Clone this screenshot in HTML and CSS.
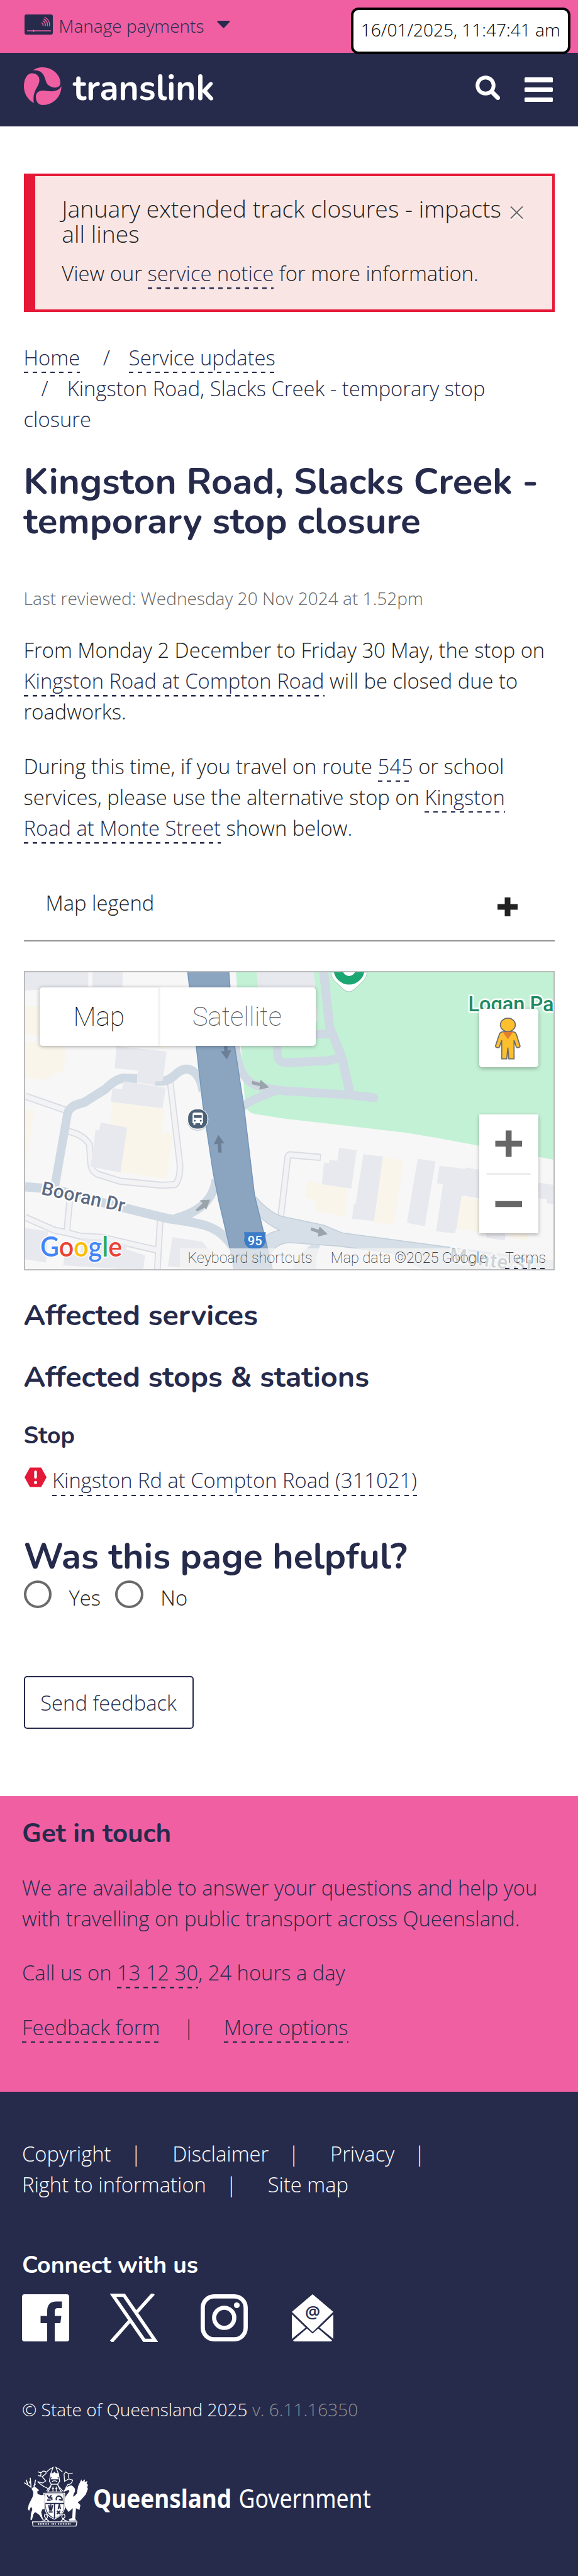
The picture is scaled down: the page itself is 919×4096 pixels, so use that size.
FILE: index.html
```html
<!DOCTYPE html>
<html lang="en">
<head>
<meta charset="utf-8">
<title>Kingston Road, Slacks Creek - temporary stop closure | Translink</title>
<link rel="stylesheet" href="styles.css">
</head>
<body>
<div class="topbar">
  <svg class="card-icon" viewBox="0 0 45 32"><rect width="45" height="32" rx="3" fill="#262b4c"/><g fill="none" stroke="#ef5fa1" stroke-width="1.5"><path d="M4 26h38M14.500 24v4"/><path d="M27 13q3 2 2.500 5M29 10q5 3 4 8.500M30.500 7q7 4.500 6 11.500M32 4q9 6 8 14.500"/></g></svg>
  <span class="topbar-label">Manage payments</span>
  <svg class="caret" viewBox="0 0 21 12"><path d="M1 0h19q1 1 0 2l-8.500 9q-1 1-2 0L.5 2Q0 1 1 0z" fill="#262b4c"/></svg>
  <div class="timestamp">16/01/2025, 11:47:41 am</div>
</div>
<header class="header">
  <svg class="swirl" viewBox="0 0 60 60" fill="#ef5fa1"><path d="M14 5Q21 0 29 0C46 0 58 12 58 25C58 31 52 33 47 32C38 30 36 26 34 19C31 9 26 4 14 5Z"/><path d="M15.800 57C6 51 0 42 0 30C0 19 5 9.400 12.500 9.400C20 9.400 25 14 24.600 21C24 32 13 36 15.800 57Z"/><path d="M59.500 30C60 47 46 60 30 60C23 60 19 54 19 47C19 40 24 37 31 37C40 38 54 41 59.500 30Z"/></svg>
  <svg class="brand" viewBox="0 0 230 64"><text x="1" y="53.500" textLength="225" lengthAdjust="spacingAndGlyphs">translink</text></svg>
  <svg class="search" viewBox="0 0 39 39" fill="none" stroke="#fff"><circle cx="16" cy="16" r="12.800" stroke-width="6"/><path d="M26.500 26.500l9 9" stroke-width="7" stroke-linecap="round"/></svg>
  <div class="menu"><i></i><i></i><i></i></div>
</header>

<main class="main">
  <section class="alert">
    <h2 class="alert-title">January extended track closures - impacts<br>all lines</h2>
    <p class="text">View our <a class="link">service notice</a> for more information.</p>
    <svg class="close" viewBox="0 0 21 24" fill="none" stroke-width="1.900"><path d="M1 4l19 19M20 4L1 23" stroke="#fff"/><path d="M1 1.500l19 19M20 1.500l-19 19" stroke="#6f6767"/></svg>
  </section>

  <nav class="crumbs text"><a class="link">Home</a> <span class="slash">/</span><a class="link">Service updates</a><br><span class="slash">/</span>Kingston Road, Slacks Creek - temporary stop<br>closure</nav>

  <h1 class="title">Kingston Road, Slacks Creek -<br>temporary stop closure</h1>
  <p class="reviewed">Last reviewed: Wednesday 20 Nov 2024 at 1.52pm</p>
  <p class="text p1">From Monday 2 December to Friday 30 May, the stop on<br><a class="link">Kingston Road at Compton Road</a> will be closed due to<br>roadworks.</p>
  <p class="text p2">During this time, if you travel on route <a class="link">545</a> or school<br>services, please use the alternative stop on <a class="link">Kingston</a><br><a class="link">Road at Monte Street</a> shown below.</p>

  <div class="legend text"><span>Map legend</span><svg class="plus" viewBox="0 0 32 30"><path d="M16 3.500v23M4 15h24" stroke="#222" stroke-width="9" stroke-linecap="square"/></svg></div>

  <div class="map">
    <svg class="tiles" viewBox="0 0 839.500 472" preserveAspectRatio="none">
      <rect width="840" height="472" fill="#f7f7f7"/>
      <g transform="matrix(.2983 0 0 .3181 -39.700 -17.800)">
        <path fill="#c3f1d5" d="M1255 40L1283 430L1305 720Q1315 755 1350 763L1515 787L2165 858L2335 885L2960 995V40z"/>
        <path fill="#e8e9ee" d="M1365 40H1670L1692 303H1390z"/>
        <g fill="none" stroke="#cfd9e3" stroke-width="44">
          <path d="M1255 430Q1270 580 1350 615Q1420 640 1515 648L1850 668L1992 683" stroke-linecap="round"/>
          <path d="M1293 725Q1340 690 1480 645M1475 420L1478 480Q1490 510 1530 508L1750 497L1800 485M1660 368L1765 362"/>
          <path d="M1722 40L1755 330L1820 480L1865 665" stroke-width="48"/>
        </g>
        <path fill="#f9f5ea" d="M133 225L230 228V375L133 365zM133 400L350 430L338 555L305 553Q260 593 240 593L133 585zM133 743L182 750L133 1030zM597 703L873 738L860 855L920 865L888 1088L640 1055L587 818zM800 425H905V438z"/>
        <path d="M133 675L350 745M360 850Q440 865 475 915L482 1010Q485 1050 520 1065L640 1100L860 1120L930 1117Q958 1095 958 1020L905 600M133 1280L290 1345L360 1358L430 1375L540 1380L840 1445M370 1200L355 1350M852 1300L837 1545M1494 1280L1532 980Q1533 968 1545 968L1708 981" fill="none" stroke="#d9dce2" stroke-width="36"/>
        <path d="M133 675L350 745M360 850Q440 865 475 915L482 1010Q485 1050 520 1065L640 1100L860 1120L930 1117Q958 1095 958 1020L905 600M133 1280L290 1345L360 1358L430 1375L540 1380L840 1445M370 1200L355 1360M852 1300L837 1545M1494 1285L1532 980Q1533 968 1545 968L1704 981" fill="none" stroke="#f3f3f5" stroke-width="24"/>
        <path d="M133 1128L290 1140L560 1210L900 1288Q1080 1310 1130 1335Q1190 1360 1240 1430M930 1287Q1130 1240 1150 1090M290 1130L358 765Q365 735 400 720L450 705L560 640Q620 585 660 585L730 588M825 600L870 600Q900 595 930 570Q990 515 1040 560Q1070 590 1080 650" fill="none" stroke="#cfd9e3" stroke-width="46"/>
        <path fill="#e8e9ee" d="M133 40H470L468 130L133 147zM492 40H652V130H492zM620 425L887 452L865 600H828L824 620L728 605L733 548L610 535zM655 600L882 632L865 735L590 703L597 635L650 640zM535 806L677 832L640 1057L482 1028L508 843L528 845zM133 1333L255 1350L245 1507L133 1490zM435 1382L677 1415L672 1440L772 1470L762 1545L335 1520L345 1462L425 1470zM918 1380L1075 1402L1130 1460L1110 1545L893 1525z"/>
        <path fill="#d6dfe7" stroke="#c3cfda" stroke-width="5" d="M1350 1165Q1430 1255 1500 1275L1725 1320L1820 1358L2950 1500V1560H2300L2100 1460L1810 1425L1560 1408Q1480 1400 1430 1470L1400 1385Q1440 1350 1490 1345Q1430 1320 1380 1275z"/>
        <path fill="#d6dfe7" d="M1655 1420h50q-30 60-20 125h-130q40-90 100-125z"/>
        <path fill="#8ba4c0" stroke="#7396ba" stroke-width="5" d="M997 40L1045 430L1080 720L1135 1060L1165 1200L1225 1440L1250 1560H1455L1405 1360L1355 1170L1300 740L1250 430L1217 40z"/>
        <g fill="#6b8096"><path d="M1193 425h18v22l20-3-23 47-34-40 19-2zM1162 868l32 42-17 1 3 45-18 1-4-44-20 3z"/></g>
        <g fill="#9aa4ab"><path d="M1342 598l40 10 6-15 45 38-52 12 2-18-43-10zM1118 1192l-20 50-8-10-42 20-6-10 36-32-15-15zM1656 1330l40 12 6-16 42 38-52 13 3-18-41-13z"/></g>
        <g transform="matrix(.998 0 0 1 1515.600 0)">
          <path fill="#e8e9ee" d="M290 933L384 945L355 1137L198 1115L210 1007L236 1010L238 995L282 997zM420 965L525 977L477 1298L360 1288L368 1215H378zM710 988L805 1000L748 1325L652 1308zM827 1022L962 1039L970 1031L1060 1047V1190L945 1170L918 1330L908 1361L808 1350L845 1115L812 1110zM1340 1105L1434 1118V1214L1400 1210V1190L1340 1183zM1075 1350L1178 1361L1175 1396L1075 1382z"/>
          <path fill="#f9f5ea" d="M122 1098L198 1115L340 1137L318 1275L160 1250L167 1193L106 1185zM525 980L635 995L583 1315L477 1307zM945 1173L1005 1185L1060 1205V1355L918 1338zM1205 1350L1300 1361L1297 1396L1205 1382z"/>
        </g>
      </g>
      <path d="M485.500 0Q487 9 492 14L507 28Q514.500 34 522 28L537 14Q542 9 543.500 0z" fill="#fff" stroke="#a9cfc0" stroke-width="1"/>
      <circle cx="514.700" cy="-5" r="24.500" fill="#1ba672"/><circle cx="514.700" cy="-4" r="10" fill="#fff"/>
      <circle cx="274.200" cy="234.500" r="17.500" fill="#8a98a5" opacity=".4"/><circle cx="274.200" cy="233.300" r="17" fill="#fff"/>
      <rect x="259" y="218" width="30.500" height="30.500" rx="13" fill="#4b6075"/>
      <path fill="#fff" d="M269 223h10.500q3 0 3 3v14h-1.500v2.500h-3V240h-7.500v2.500h-3V240h-1.500v-14q0-3 3-3z"/><path fill="#4b6075" d="M268 227h12.500v4.500H268z"/><circle cx="269.500" cy="236" r="1.500" fill="#4b6075"/><circle cx="279" cy="236" r="1.500" fill="#4b6075"/>
      <path fill="#3b7bc8" d="M347.800 413h34.600q-1.500 7 0 13-1 9-10.500 13.500-7 2.500-14 0-9-4.500-10-13.500 1.500-6 0-13z"/>
      <g class="maplabels">
        <text x="365" y="433.500" text-anchor="middle" font-size="21" fill="#fff" textLength="23" lengthAdjust="spacingAndGlyphs">95</text>
        <text class="halo" transform="translate(24.500 352.500) rotate(12.300)" font-size="30" fill="#5b6b85" textLength="135">Booran Dr</text>
        <text class="halo" x="704" y="61.500" font-size="32.500" fill="#1f8a5f">Logan Park</text>
        <text class="halo" transform="translate(673 459) rotate(8)" font-size="31" fill="#6d7987" textLength="133">Monte St</text>
      </g>
    </svg>
    <div class="map-type"><span class="mt-map">Map</span><span class="mt-sat">Satellite</span></div>
    <div class="pegman"><svg viewBox="-3 -3 138 226"><g fill="#fdbf2d" stroke="#6f6f6f" stroke-width="6"><path d="M40 75Q25 75 20 90L0 150Q0 160 15 160Q20 160 22 153L33 120V220H60L66 160L71 220H99V120L110 153Q113 160 120 160Q132 158 131 150L112 90Q107 75 92 75z"/><ellipse cx="66" cy="38" rx="40" ry="36"/></g><path d="M39 76H93L66 115z" fill="#e17e30"/></svg></div>
    <div class="zoomer"><svg viewBox="0 0 93.500 189"><path d="M25.500 46.500h42.500M46.700 25.500v42M25.500 142.500h42.500" stroke="#666" stroke-width="9.500"/><path d="M11.600 94.600h70.300" stroke="#e6e6e6" stroke-width="2.300"/></svg></div>
    <svg class="google" viewBox="0 0 136 60"><text x="2" y="34" textLength="130" lengthAdjust="spacingAndGlyphs"><tspan fill="#4285f4">G</tspan><tspan fill="#ea4335">o</tspan><tspan fill="#fbbc05">o</tspan><tspan fill="#4285f4">g</tspan><tspan fill="#34a853">l</tspan><tspan fill="#ea4335">e</tspan></text></svg>
    <div class="attribution"><span>Keyboard shortcuts</span><span class="md">Map data ©2025 Google</span><span class="terms link">Terms</span></div>
  </div>

  <h3 class="sub services">Affected services</h3>
  <h3 class="sub stops">Affected stops &amp; stations</h3>
  <h4 class="small-head stop">Stop</h4>
  <div class="stop-row text"><svg class="warn" viewBox="0 0 35 32"><path d="M8.500.5h18L35 16l-8.500 15.500h-18L0 16z" fill="#e51937"/><path d="M17.500 7.500v8.500" stroke="#fff" stroke-width="4.300" stroke-linecap="round"/><circle cx="17.500" cy="24.200" r="2.500" fill="#fff"/></svg><a class="link">Kingston Rd at Compton Road (311021)</a></div>

  <h2 class="helpful">Was this page helpful?</h2>
  <div class="radios text"><i class="radio"></i><span class="yes">Yes</span><i class="radio"></i><span class="no">No</span></div>
  <button class="send">Send feedback</button>
</main>

<section class="touch">
  <h3 class="touch-head">Get in touch</h3>
  <p class="text">We are available to answer your questions and help you<br>with travelling on public transport across Queensland.</p>
  <p class="text">Call us on <a class="link">13 12 30</a>, 24 hours a day</p>
  <p class="text"><a class="link">Feedback form</a><span class="bar wide">|</span><a class="link">More options</a></p>
</section>

<footer class="footer">
  <div class="text foot-links">Copyright<span class="bar">|</span>Disclaimer<span class="bar">|</span>Privacy<span class="bar">|</span><br>Right to information<span class="bar">|</span>Site map</div>
  <h4 class="small-head connect">Connect with us</h4>
  <div class="social">
    <svg width="75" height="75" viewBox="0 0 75 75"><path fill="#fff" fill-rule="evenodd" d="M4 0h67q4 0 4 4v67q0 4-4 4H52V46h9l1.500-11.500H52V27q0-5 5-5h6.500V11.500H55q-15 0-15 15v8H29.500V46H40v29H4q-4 0-4-4V4q0-4 4-4z"/></svg>
    <svg width="76" height="77" viewBox="0 0 76 77" fill="none" stroke="#fff" stroke-width="5.500"><path d="M4.500 2.500H22L71.500 74.500H54.500z"/><path d="M69 0L41 31M32.500 42L2 76.500"/></svg>
    <svg width="75" height="75" viewBox="0 0 75 75" fill="none" stroke="#fff" stroke-width="6.700"><rect x="3.400" y="3.400" width="68.200" height="68.200" rx="18"/><circle cx="37.500" cy="37.500" r="16"/><circle cx="57.500" cy="17.500" r="4.600" fill="#fff" stroke="none"/></svg>
    <svg width="66" height="75" viewBox="0 0 66 75" fill="#fff"><path d="M33 0L66 28L33 60L0 28zM0 32L22 53L0 71zM66 32L44 53L66 71zM24 54.500L33 62.500L42 54.500L64 73.500Q63 75 61 75H5Q3 75 2 73.500z"/><text x="33" y="38" text-anchor="middle" class="at">@</text></svg>
  </div>
  <p class="copy">© State of Queensland 2025 <span>v. 6.11.16350</span></p>
  <svg class="gov" viewBox="0 0 560 96">
    <g transform="matrix(.2598 0 0 .2598 -5.800 -7.700)" fill="none" stroke="#fff" stroke-width="5">
      <path d="M78 368H351L345 394H82z"/>
      <path fill="#fff" stroke="none" d="M72 165Q85 148 100 158L120 175L108 182L110 198L135 205L152 200V290L138 292L132 310L142 348L158 353L140 355L120 325L95 308L85 320L78 345L75 357L66 354L70 315L78 290L70 275L58 300L50 290L56 262L82 210L84 185z"/>
      <path d="M28 128L50 142L72 158M40 110L52 143M65 98L70 155M98 110L88 155M98 135L86 150M64 132L58 120" stroke-width="6"/>
      <path fill="#fff" stroke="none" d="M268 180Q290 145 318 145Q345 160 338 185Q325 205 330 215L350 195L358 150L378 108L382 122L400 108L398 124L415 118L410 135L418 140L414 158L418 165L405 200L375 235L355 248L372 265L366 295L345 285L340 350L350 360L305 362L300 350L322 345L325 285L300 308L280 280L270 240L280 215L305 180L300 172L270 185z"/>
      <path d="M148 193H276V262Q280 320 212 352Q148 325 156 262z" fill="#262b4c"/>
      <path fill="#fff" stroke="none" d="M155 199H270V252H155zM160 260H210V345Q160 318 160 270zM217 260H270Q275 320 217 345z"/>
      <path stroke="#262b4c" stroke-width="8" d="M168 205L180 222L195 205M168 235H190M185 222h12v14M225 235Q220 212 240 210Q262 215 260 235L240 232M178 265L186 300M190 262V300M202 265L194 300M178 308H202M228 300L248 320M248 300L228 320M236 290L243 262L250 290"/>
      <path d="M165 62L185 45L205 35L190 75L182 120L195 140L165 180M262 62L242 45L222 35L238 75L245 120L230 140L265 180"/>
      <path d="M112 60Q130 75 142 58Q165 55 162 72L138 92L160 118L140 130L110 122Q135 145 150 152L175 165M325 70Q300 78 282 62L272 75L275 120L300 105L325 112Q318 140 295 140L280 165M130 62V88L112 85M300 75V100"/>
      <path fill="#fff" stroke="none" d="M190 70H205L213 60L221 70H240V90L232 96L240 108H190L196 96L188 90z"/>
      <path d="M198 122Q213 112 230 122M190 138H238M192 148Q185 165 172 185H256Q242 165 236 148M204 152V182M224 152V182M197 164H211M217 164H231"/>
      <path d="M135 365Q175 355 170 330Q150 310 152 335Q160 350 180 365M295 365Q255 355 258 330Q275 310 278 335Q270 350 252 365"/>
      <path d="M114 381H180M196 381H222M236 381H316" stroke-width="9" stroke-dasharray="5 5"/>
    </g>
    <text x="111" y="65.500" font-weight="700" textLength="220" lengthAdjust="spacingAndGlyphs">Queensland</text>
    <text x="342.500" y="65.500" font-weight="400" textLength="210" lengthAdjust="spacingAndGlyphs">Government</text>
  </svg>
</footer>
</body>
</html>
```
FILE: styles.css
```css
* { box-sizing: border-box; margin: 0; padding: 0; }
body { width: 919px; height: 4096px; overflow: hidden; background: #fff; color: #222; font-family: "Open Sans", "Noto Sans", sans-serif; font-weight: 300; display: flex; flex-direction: column; }
svg { display: block; flex: none; }
.text { font-size: 32.74px; line-height: 49.1px; white-space: nowrap; }
.link { color: #262b4c; padding-bottom: 2.5px; background: repeating-linear-gradient(90deg, #262b4c 0 7px, transparent 7px 14px) left bottom / 100% 2.5px no-repeat; }

.topbar { position: relative; flex: none; height: 84.2px; background: #ef5fa1; display: flex; align-items: flex-start; padding-left: 38.7px; }
.card-icon { width: 45px; height: 32px; margin-top: 22.5px; }
.topbar-label { font-size: 28.06px; line-height: 42px; margin: 19.5px 0 0 9.5px; color: #262b4c; white-space: nowrap; }
.caret { width: 21px; height: 12px; margin: 32.8px 0 0 20px; }
.timestamp { position: absolute; left: 557.5px; top: 11.7px; width: 349.5px; height: 74.6px; border: 4.7px solid #000; border-radius: 12px; background: #fff; color: #000; font-size: 28.06px; line-height: 63px; text-align: center; white-space: nowrap; z-index: 2; }

.header { flex: none; height: 117px; background: #262b4c; display: flex; align-items: flex-start; padding-left: 37.5px; }
.swirl { width: 60px; height: 60px; margin-top: 22.6px; }
.brand { width: 230px; height: 64px; margin: 20.8px 0 0 17px; font-family: Nunito, "Open Sans", sans-serif; font-weight: 700; font-size: 57px; fill: #fff; }
.search { width: 39px; height: 39px; margin: 36px 0 0 411.500px; }
.menu { width: 44.5px; margin: 39.2px 0 0 39px; display: flex; flex-direction: column; gap: 8.5px; }
.menu i { height: 7.3px; border-radius: 1.5px; background: #fff; }

.main { flex: none; height: 2654.9px; padding: 74.9px 37.5px 0; }
.alert { position: relative; height: 219.7px; border: 4.7px solid #e51937; border-left-width: 18.7px; background: #f9e6e4; padding: 32px 0 0 42.8px; }
.alert-title { font-size: 37.4px; line-height: 39.8px; font-weight: 300; margin-bottom: 18.7px; white-space: nowrap; }
.close { position: absolute; right: 46px; top: 47px; width: 21px; height: 24px; }
.crumbs { margin-top: 47.8px; color: #262b4c; }
.slash { padding: 0 30px 0 28px; }
.title, .sub, .small-head, .helpful, .touch-head { font-family: Nunito, "Open Sans", sans-serif; font-weight: 700; color: #262b4c; white-space: nowrap; }
.title { margin-top: 44px; font-size: 58.5px; line-height: 63.1px; }
.reviewed { margin-top: 69px; font-size: 28.06px; line-height: 42.1px; color: #666; }
.p1 { margin-top: 36.9px; }
.p2 { margin-top: 37.6px; }
.legend { margin-top: 70.2px; height: 85.8px; border-bottom: 2.3px solid #929292; display: flex; padding: 0 58.5px 0 35px; justify-content: space-between; }
.plus { width: 32px; height: 30px; margin-top: 15.5px; }

.map { position: relative; margin-top: 46.8px; height: 476.2px; border: 2.2px solid #bbb; overflow: hidden; font-family: Roboto, sans-serif; }
.tiles { width: 100%; height: 100%; }
.maplabels { font-family: Roboto, sans-serif; font-weight: 500; }
.halo { paint-order: stroke; stroke: #fff; stroke-width: 5px; stroke-linejoin: round; }
.map-type { position: absolute; left: 23.5px; top: 23.8px; width: 439px; height: 93.4px; display: flex; background: #fff; border-radius: 4.7px; box-shadow: 0 1px 6px rgba(0,0,0,.3); font-size: 42.1px; font-weight: 100; line-height: 93px; text-align: center; }
.mt-map { width: 188.6px; color: #000; box-shadow: 1px 0 3px rgba(0,0,0,.15); }
.mt-sat { flex: 1; color: #565656; }
.pegman { position: absolute; left: 722.7px; top: 58px; width: 93.5px; height: 93.5px; border-radius: 4.7px; background: #fff; box-shadow: 0 2px 6px rgba(0,0,0,.3); }
.pegman svg { width: 41px; height: 72px; margin: 11px 0 0 25px; }
.zoomer { position: absolute; left: 722.7px; top: 226.2px; width: 93.5px; height: 189px; background: #fff; box-shadow: 0 2px 6px rgba(0,0,0,.3); }
.google { position: absolute; left: 22.5px; top: 418.5px; width: 136px; height: 60px; }
.google text { font-family: Lato, sans-serif; font-weight: 600; font-size: 44px; paint-order: stroke; stroke: rgba(255,255,255,.8); stroke-width: 4px; }
.attribution { position: absolute; left: 246px; right: 0; bottom: 0; height: 33px; background: rgba(245,245,245,.72); display: flex; padding-left: 13px; font-size: 23.4px; font-weight: 100; line-height: 31px; color: #111; white-space: nowrap; }
.md { margin-left: 29px; }
.terms { margin-left: 29px; color: #111; height: 33px; }

.sub { font-size: 46.8px; line-height: 51.4px; }
.services { margin-top: 46.5px; }
.stops { margin-top: 46.6px; }
.small-head { font-size: 37.4px; line-height: 41.2px; }
.stop { margin-top: 45.9px; }
.stop-row { margin-top: 26px; display: flex; align-items: flex-start; }
.stop-row .link { line-height: 44.6px; margin-top: 2.8px; }
.warn { width: 35px; height: 32px; margin: 3.4px 9.5px 0 1px; }
.helpful { margin-top: 66px; font-size: 57.2px; line-height: 61.7px; }
.radios { margin-top: 6px; height: 44.2px; display: flex; align-items: flex-start; line-height: 56px; }
.radio { width: 44.4px; height: 44.2px; border: 4.7px solid #6a6a6a; border-radius: 50%; }
.yes { margin: 0 24.5px 0 27.5px; width: 49.5px; }
.no { margin-left: 27.5px; }
.send { display: block; margin-top: 107.8px; width: 270.2px; height: 84.2px; border: 2.3px solid #262b4c; border-radius: 5px; background: #fff; color: #262b4c; font: 300 32.74px/79px "Open Sans", sans-serif; text-align: center; padding-top: 1px; }

.touch { flex: none; height: 470.3px; background: #ef5fa1; padding: 35.5px 35px 0; color: #262b4c; }
.touch-head { font-size: 42.1px; line-height: 46.3px; margin-bottom: 39px; }
.touch .text { margin-bottom: 37.3px; }
.bar { margin: 0 49px 0 31px; }
.bar.wide { margin: 0 47px 0 37px; }

.footer { flex: none; height: 769.6px; background: #262b4c; color: #fff; padding: 73.3px 35px 0; }
.connect { color: #fff; margin-top: 83.5px; }
.social { display: flex; align-items: center; margin-top: 24.5px; height: 77px; }
.social svg + svg { margin-left: 65px; }
.social svg:nth-child(3) { margin-left: 67.5px; }
.social svg:nth-child(4) { margin-left: 70px; }
.at { font: 600 27px "Open Sans", sans-serif; fill: #262b4c; }
.copy { margin-top: 86px; font-size: 28.06px; line-height: 42.1px; white-space: nowrap; }
.copy span { color: #8f8f8f; }
.gov { width: 560px; height: 96px; margin-top: 69.5px; margin-left: 2px; font-family: "Noto Sans", sans-serif; font-size: 42px; fill: #fff; }
```
